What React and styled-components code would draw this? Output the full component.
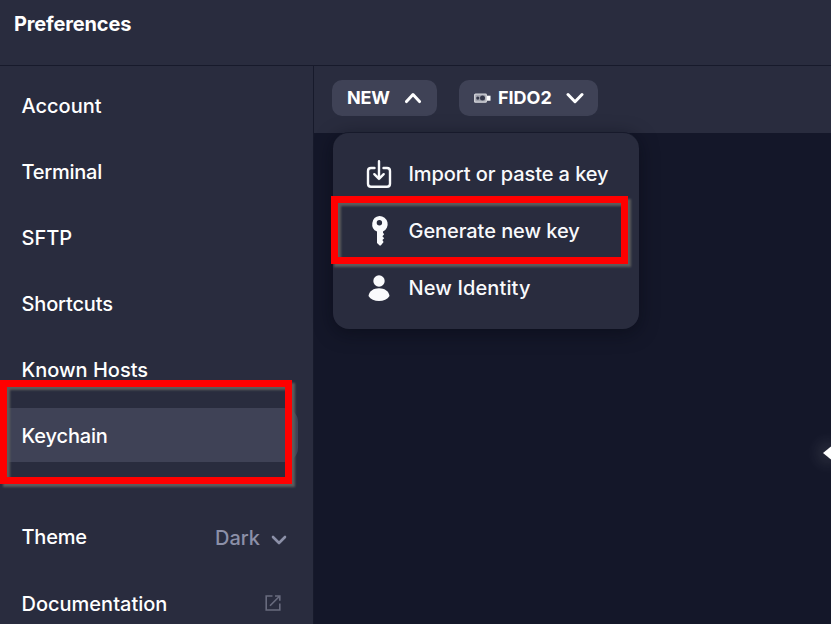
import React from 'react';
import styled, { createGlobalStyle } from 'styled-components';

const GlobalStyle = createGlobalStyle`
  * { box-sizing: border-box; }
  body {
    margin: 0;
    overflow: hidden;
    background: #141729;
    color: #fff;
    font-family: Inter, "Liberation Sans", sans-serif;
  }
`;

const Window = styled.div`
  position: relative;
  display: flex;
  flex-direction: column;
  width: 831px;
  height: 624px;
  overflow: hidden;
`;

const Header = styled.header`
  flex: none;
  height: 66px;
  padding: 12px 14px;
  background: #292c3e;
  border-bottom: 1px solid #171a2b;
`;

const Title = styled.h1`
  margin: 0;
  font-size: 20px;
  line-height: 24px;
  font-weight: 700;
  letter-spacing: ${(p) => p.$spacing}px;
`;

const Body = styled.div`
  display: flex;
  flex: 1;
  min-height: 0;
`;

const Sidebar = styled.nav`
  flex: none;
  width: 314px;
  padding-top: 12px;
  background: #292c3e;
  border-right: 1px solid #171a2b;
`;

const NavItem = styled.div`
  display: flex;
  align-items: center;
  justify-content: space-between;
  width: 298px;
  height: 54px;
  margin-bottom: ${(p) => p.$gap ?? 12}px;
  padding: 2px 11px 0 21.5px;
  border-radius: 0 14px 14px 0;
  background: ${(p) => (p.$active ? '#3f4256' : 'transparent')};
`;

const Label = styled.span`
  font-size: 20px;
  line-height: 26px;
  font-weight: 500;
  white-space: nowrap;
  letter-spacing: ${(p) => p.$spacing ?? 0}px;
`;

const ThemeValue = styled.span`
  display: flex;
  align-items: center;
  gap: 11px;
  padding-top: 2px;
  color: #8c90a8;
`;

const LinkIcon = styled.svg`
  display: block;
  margin: 0 5px 3px 0;
`;

const Content = styled.main`
  flex: 1;
  background: #141729;
`;

const Toolbar = styled.div`
  display: flex;
  gap: 22px;
  height: 67px;
  padding: 14px 18px;
  background: #292c3e;
`;

const Button = styled.button`
  display: flex;
  align-items: center;
  width: ${(p) => p.$width}px;
  height: 36px;
  padding: 0 14px 0 15px;
  border: 0;
  border-radius: 10px;
  background: #3f4256;
  color: #fff;
  font: 700 18px/24px Inter, sans-serif;
  letter-spacing: ${(p) => p.$spacing}px;
`;

const Caret = styled.svg`
  display: block;
  margin-left: auto;
`;

const DeviceIcon = styled.svg`
  display: block;
  margin-right: 7px;
`;

const Menu = styled.div`
  position: absolute;
  left: 333px;
  top: 132px;
  width: 306px;
  height: 197px;
  padding-top: 12px;
  border-top: 1px solid #171a2b;
  border-radius: 16px;
  background: #292c3e;
  box-shadow: 0 4px 18px rgba(6, 8, 18, 0.5);
`;

const MenuItem = styled.div`
  display: flex;
  align-items: center;
  gap: 13.5px;
  height: 57px;
  padding-left: 30px;
  color: #f9fafc;
`;

const MenuIcon = styled.svg`
  display: block;
  flex: none;
`;

const Highlight = styled.div`
  position: absolute;
  left: ${(p) => p.$x}px;
  top: ${(p) => p.$y}px;
  width: ${(p) => p.$w}px;
  height: ${(p) => p.$h}px;
  border: 7px solid #f00;
  filter: drop-shadow(3px 3px 1px #5b5c5c);
  pointer-events: none;
`;

const EdgeHandle = styled.svg`
  position: absolute;
  right: 0;
  top: 444px;
  filter: drop-shadow(0 0 9px rgba(255, 255, 255, 0.7));
`;

const NAV = [
  ['Account', 0],
  ['Terminal', -0.25],
  ['SFTP', 0],
  ['Shortcuts', -0.15],
  ['Known Hosts', 0],
];

function Chevron({ up }) {
  return (
    <Caret width="18" height="12" viewBox="0 0 18 12" fill="none" stroke="#fff" strokeWidth="3" strokeLinecap="round" strokeLinejoin="round">
      <path d={up ? 'M1.5 9.6 8 2.6l6.5 7' : 'M2 2.5 9 9.7l7-7.2'} />
    </Caret>
  );
}

export default function App() {
  return (
    <>
      <GlobalStyle />
      <Window>
        <Header>
          <Title $spacing={-0.15}>Preferences</Title>
        </Header>
        <Body>
          <Sidebar>
            {NAV.map(([name, spacing]) => (
              <NavItem key={name}>
                <Label $spacing={spacing}>{name}</Label>
              </NavItem>
            ))}
            <NavItem $active $gap={47}>
              <Label $spacing={-0.15}>Keychain</Label>
            </NavItem>
            <NavItem $gap={13}>
              <Label $spacing={-0.2}>Theme</Label>
              <ThemeValue>
                <Label>Dark</Label>
                <svg width="16" height="14" viewBox="0 0 16 14" fill="none" stroke="currentColor" strokeWidth="2.6" strokeLinecap="round" strokeLinejoin="round">
                  <path d="M2 6l6 6 6-6" />
                </svg>
              </ThemeValue>
            </NavItem>
            <NavItem>
              <Label>Documentation</Label>
              <LinkIcon width="18" height="18" viewBox="0 0 18 18" fill="none" stroke="#686b7e" strokeWidth="1.6">
                <path d="M8.5 2H2.2v14h13.6V9.5M11 2h4.8v4.8M15.5 2.3 6 11.8" />
              </LinkIcon>
            </NavItem>
          </Sidebar>
          <Content>
            <Toolbar>
              <Button $width={105} $spacing={-0.2}>
                NEW
                <Chevron up />
              </Button>
              <Button $width={139} $spacing={0}>
                <DeviceIcon width="17" height="10" viewBox="0 0 17 10">
                  <rect x="0.7" y="1.2" width="11.6" height="8" rx="0.8" fill="#a2a4ae" stroke="#d4d5da" strokeWidth="1.3" />
                  <circle cx="3.8" cy="5.1" r="1.6" fill="#35384a" />
                  <circle cx="8.5" cy="5.1" r="2.5" fill="#35384a" />
                  <path d="M13 2.7h3.5v5H13z" fill="#fff" />
                </DeviceIcon>
                FIDO2
                <Chevron />
              </Button>
            </Toolbar>
          </Content>
        </Body>
        <Menu>
          <MenuItem>
            <MenuIcon width="32" height="32" viewBox="0 0 32 32" fill="none" stroke="#f9fafc" strokeWidth="2.4" strokeLinecap="round" strokeLinejoin="round">
              <path d="M11.5 10H8Q5 10 5 13v12.7q0 3 3 3h16q3 0 3-3V13q0-3-3-3h-3.500M16 3.200v17.600M11.300 16.200l4.700 4.700 4.700-4.700" />
            </MenuIcon>
            <Label $spacing={-0.08}>Import or paste a key</Label>
          </MenuItem>
          <MenuItem>
            <MenuIcon width="32" height="32" viewBox="0 0 32 32" fill="#f9fafc">
              <path fillRule="evenodd" d="M16.400 1a8.200 8.200 0 0 1 3.600 15.600v1.100l1.200 1.600-1.800 2 1.800 2-1.800 1.800 1.200 1.900-2.800 3.500h-1.200L14 28V16.600A8.200 8.200 0 0 1 16.400 1Zm0 4a2.700 2.700 0 1 0 0 5.400 2.700 2.700 0 0 0 0-5.400Z" />
            </MenuIcon>
            <Label $spacing={-0.06}>Generate new key</Label>
          </MenuItem>
          <MenuItem>
            <MenuIcon width="32" height="32" viewBox="0 0 32 32" fill="#f9fafc">
              <circle cx="16" cy="9" r="5.7" />
              <path d="M5.500 23.900C6.500 19 10.500 16.300 16 16.300s9.500 2.700 10.500 7.600C24.500 27.200 20.500 29 16 29S7.500 27.200 5.500 23.900Z" />
            </MenuIcon>
            <Label $spacing={0.12}>New Identity</Label>
          </MenuItem>
        </Menu>
        <EdgeHandle width="9" height="18" viewBox="0 0 9 18">
          <path d="M1 9 9 2.500v13Z" fill="#fff" />
        </EdgeHandle>
        <Highlight $x={0} $y={380} $w={292} $h={104} />
        <Highlight $x={331} $y={196} $w={297} $h={68} />
      </Window>
    </>
  );
}
